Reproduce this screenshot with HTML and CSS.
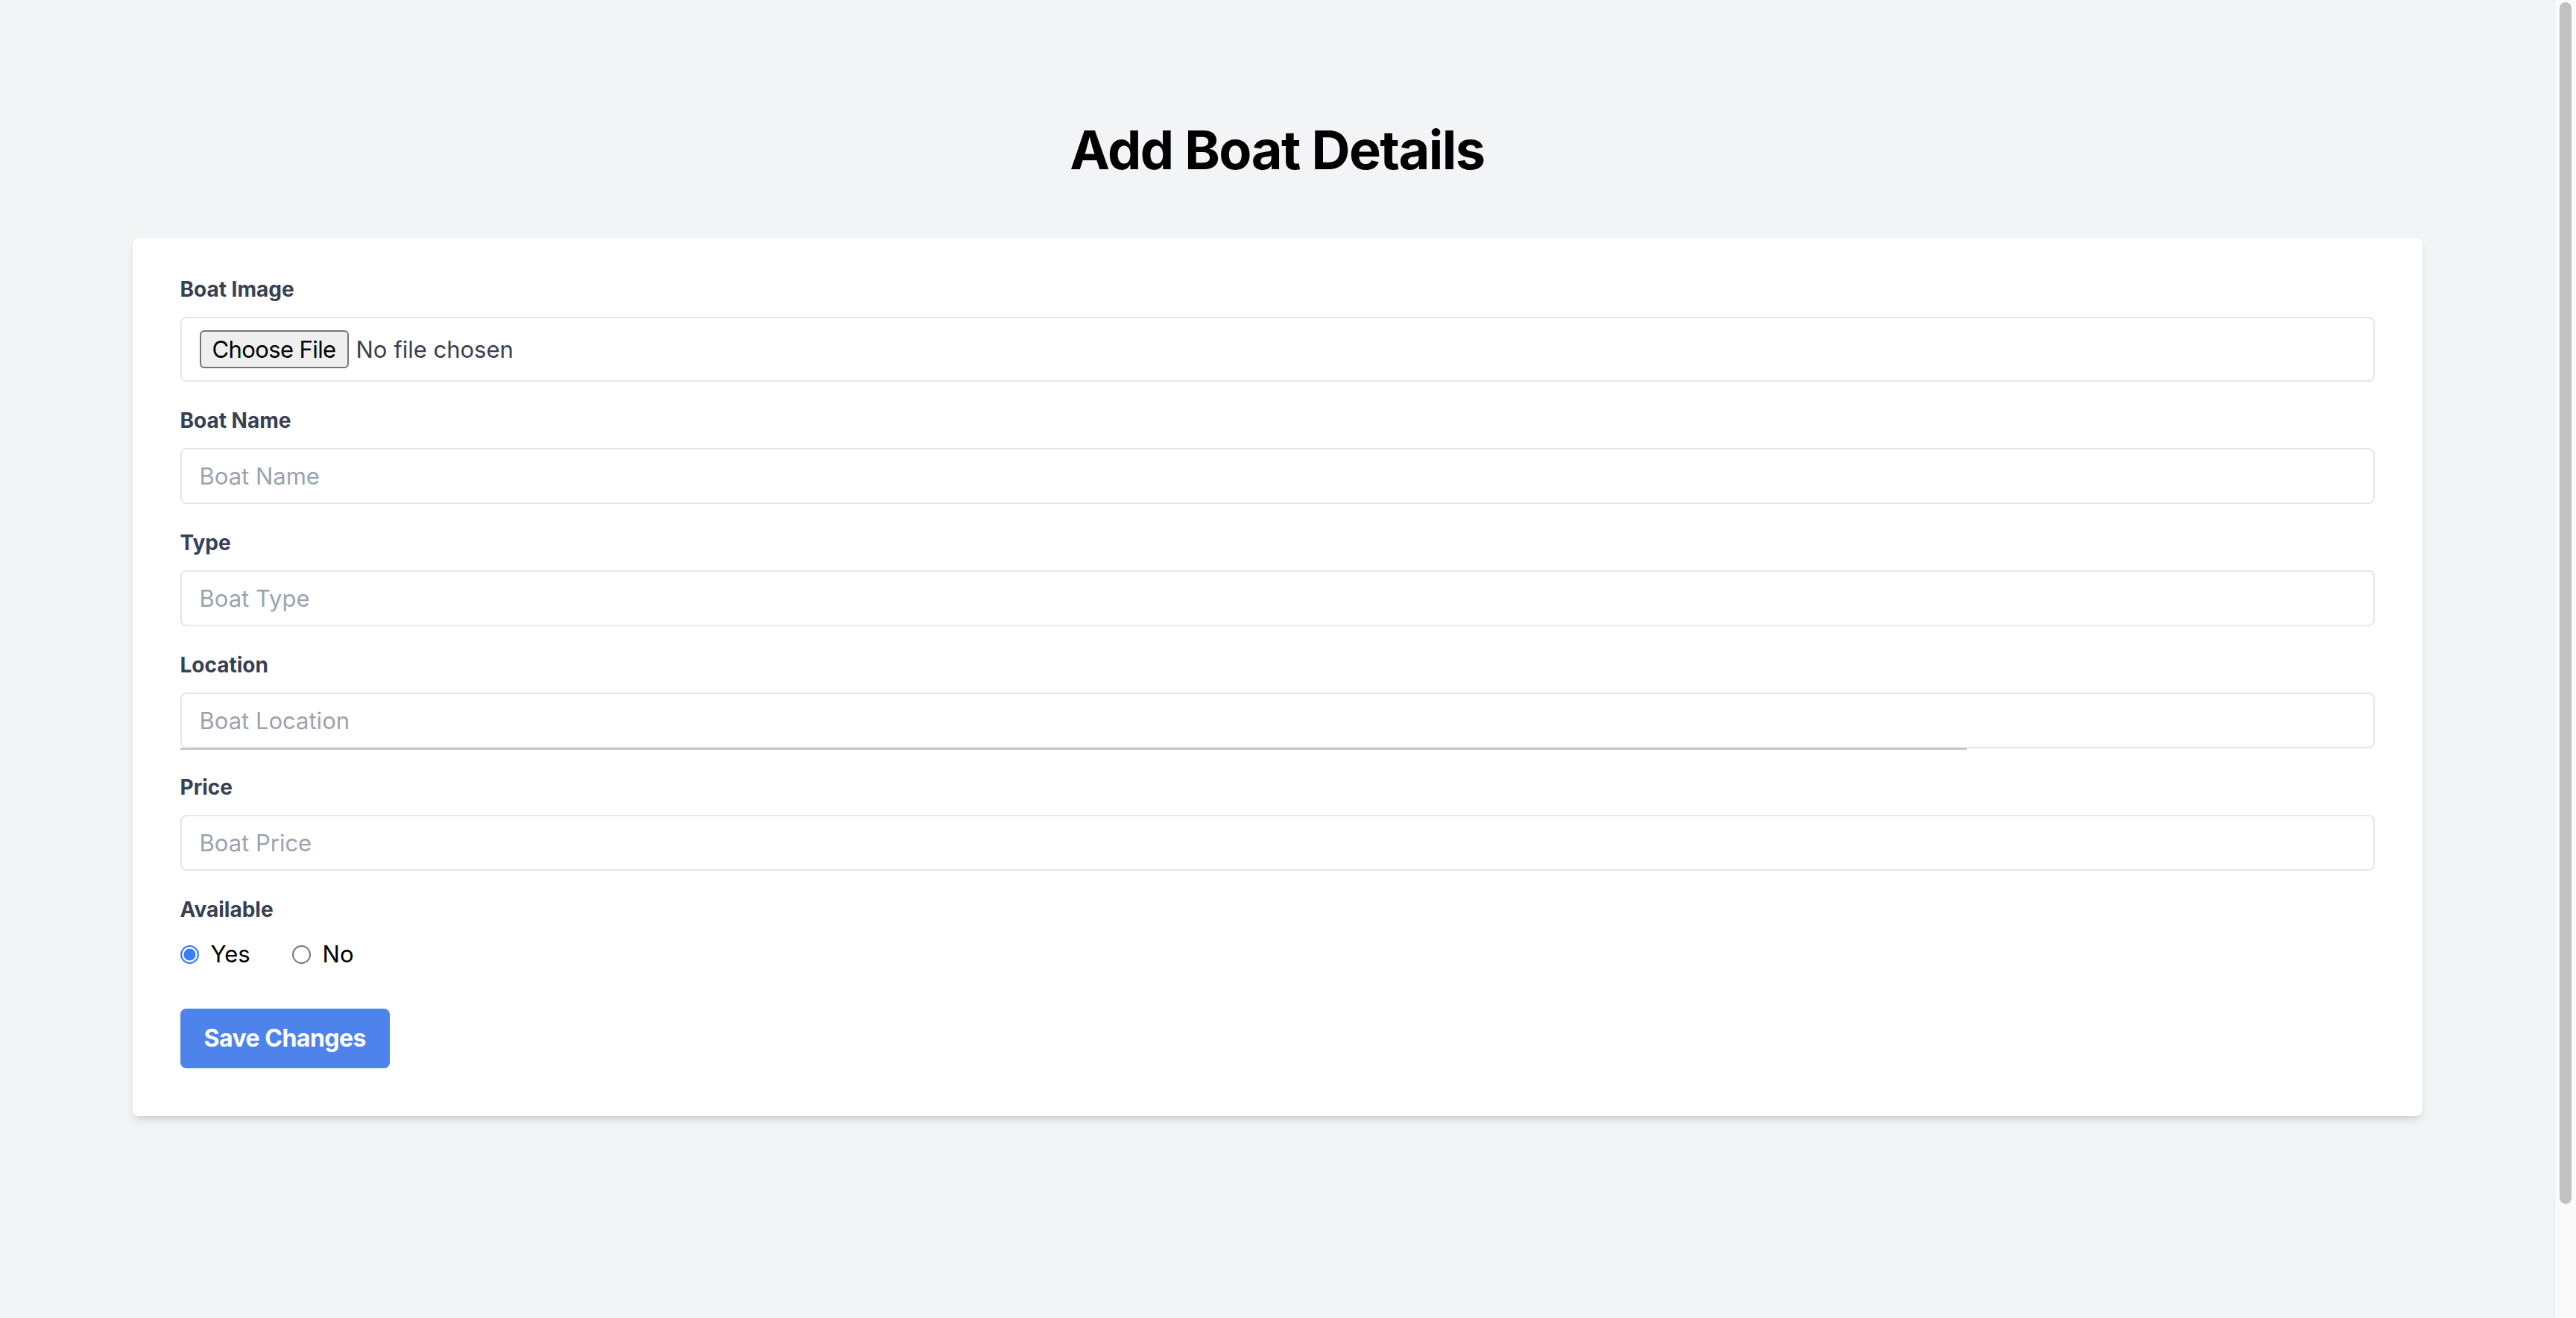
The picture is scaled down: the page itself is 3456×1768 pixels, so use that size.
FILE: index.html
```html
<!DOCTYPE html>
<html lang="en">
<head>
<meta charset="utf-8">
<title>Add Boat Details</title>
<link rel="stylesheet" href="styles.css">
</head>
<body>
<div class="page">
  <h1 class="title">Add Boat Details</h1>
  <form class="card">
    <div class="field">
      <label class="label" for="boat-image">Boat Image</label>
      <input class="file-input" type="file" id="boat-image">
    </div>
    <div class="field">
      <label class="label" for="boat-name">Boat Name</label>
      <input class="text-input" type="text" id="boat-name" placeholder="Boat Name">
    </div>
    <div class="field">
      <label class="label" for="boat-type">Type</label>
      <input class="text-input" type="text" id="boat-type" placeholder="Boat Type">
    </div>
    <div class="field">
      <label class="label" for="boat-location">Location</label>
      <div class="input-wrap">
        <input class="text-input" type="text" id="boat-location" placeholder="Boat Location">
        <div class="loc-line"></div>
      </div>
    </div>
    <div class="field">
      <label class="label" for="boat-price">Price</label>
      <input class="text-input" type="text" id="boat-price" placeholder="Boat Price">
    </div>
    <div class="field field-radio">
      <span class="label">Available</span>
      <div class="radio-row">
        <label class="radio-opt"><input class="radio" type="radio" name="available" checked><span class="radio-text">Yes</span></label>
        <label class="radio-opt radio-opt-second"><input class="radio" type="radio" name="available"><span class="radio-text">No</span></label>
      </div>
    </div>
    <button class="save" type="button">Save Changes</button>
  </form>
</div>
<div class="scrollbar" aria-hidden="true"><div class="scrollbar-thumb"></div></div>
</body>
</html>
```

FILE: styles.css
```css
html, body {
  margin: 0;
  padding: 0;
}

body {
  background: #f3f4f6;
  font-family: Inter, "Liberation Sans", sans-serif;
  color: #000;
  overflow: hidden;
}

.page {
  box-sizing: border-box;
  width: calc(100% - 29px);
  padding: 161px 0 100px;
}

.scrollbar {
  position: fixed;
  top: 0;
  right: 0;
  box-sizing: border-box;
  width: 29px;
  height: 100vh;
  background: #fafafa;
  border-left: 1px solid #e8e8e8;
}

.scrollbar-thumb {
  position: absolute;
  top: 3px;
  left: 6px;
  width: 16px;
  height: 1612px;
  border-radius: 8px;
  background: #c1c1c1;
}

.title {
  margin: 0 0 79px;
  text-align: center;
  font-size: 72px;
  line-height: 80px;
  font-weight: 700;
  letter-spacing: -1.5px;
  color: #000;
}

.card {
  display: block;
  box-sizing: border-box;
  max-width: 3072px;
  margin: 0 auto;
  padding: 48px 64px 64px;
  background: #fff;
  border-radius: 8px;
  box-shadow: 0 8px 12px -2px rgba(0, 0, 0, 0.1), 0 4px 8px -4px rgba(0, 0, 0, 0.1);
}

.field {
  margin-bottom: 32px;
}

.label {
  display: block;
  margin-bottom: 17px;
  font-size: 28px;
  line-height: 40px;
  font-weight: 700;
  color: #374151;
}

.file-input {
  display: block;
  box-sizing: border-box;
  width: 100%;
  height: 87px;
  padding: 16px 24px;
  border: 2px solid #e5e7eb;
  border-radius: 8px;
  background: #fff;
  font-family: inherit;
  font-size: 31px;
  color: #374151;
  outline: none;
}

.file-input::file-selector-button {
  box-sizing: border-box;
  width: 200px;
  height: 51px;
  margin: 0 10px 0 0;
  padding: 0;
  border: 2px solid #767676;
  border-radius: 6px;
  background: #efefef;
  font-family: inherit;
  font-size: 31px;
  letter-spacing: -0.6px;
  color: #000;
}

.text-input {
  display: block;
  box-sizing: border-box;
  width: 100%;
  height: 75px;
  padding: 0 24px;
  border: 2px solid #e5e7eb;
  border-radius: 8px;
  background: #fff;
  font-family: inherit;
  font-size: 31px;
  color: #374151;
  outline: none;
}

.text-input::placeholder {
  color: #9ca3af;
}

.input-wrap {
  position: relative;
}

.loc-line {
  position: absolute;
  left: 0;
  top: calc(100% - 1px);
  width: 2397px;
  height: 3px;
  background: #c9c9c9;
}

.field-radio .label {
  margin-bottom: 16px;
}

.field-radio {
  margin-bottom: 49px;
}

.radio-row {
  display: flex;
  align-items: center;
  height: 48px;
}

.radio-opt {
  display: inline-flex;
  align-items: center;
  font-size: 31px;
  line-height: 48px;
  color: #000;
}

.radio-opt-second {
  margin-left: 56px;
}

.radio {
  appearance: none;
  -webkit-appearance: none;
  box-sizing: border-box;
  width: 25px;
  height: 25px;
  margin: 0;
  border: 2px solid #767676;
  border-radius: 50%;
  background: #fff;
}

.radio:checked {
  border-color: #3b7ef6;
  background: #3b7ef6;
  box-shadow: inset 0 0 0 2.5px #fff;
}

.radio-text {
  margin-left: 16px;
}

.save {
  display: inline-block;
  box-sizing: border-box;
  height: 80px;
  padding: 0 32px;
  border: none;
  border-radius: 8px;
  background: #4f83ec;
  color: #fff;
  font-family: inherit;
  font-size: 32px;
  font-weight: 700;
  letter-spacing: -0.5px;
  line-height: 48px;
}
```
